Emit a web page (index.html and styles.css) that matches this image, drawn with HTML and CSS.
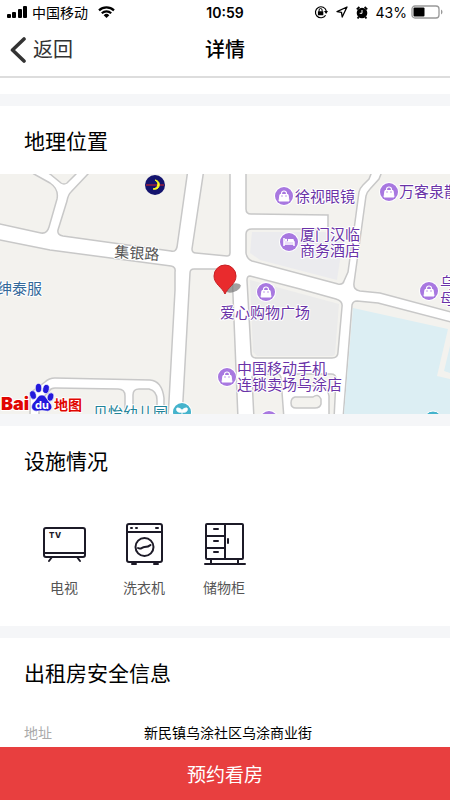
FILE: index.html
```html
<!DOCTYPE html>
<html lang="zh-CN">
<head>
  <meta charset="UTF-8" />
  <meta name="viewport" content="width=device-width, initial-scale=1" />
  <title>详情</title>
  <link rel="stylesheet" href="styles.css">
</head>
<body>
  <!-- STATUS BAR -->
  <div class="status-bar">
    <div class="status-left">
      <svg width="21" height="12" viewBox="0 0 21 12">
        <rect x="0" y="8" width="4" height="4" rx="1" />
        <rect x="5" y="6" width="4" height="6" rx="1" />
        <rect x="11" y="3" width="4" height="9" rx="1" />
        <rect x="16" y="0" width="4" height="12" rx="1" />
      </svg>
      <span>中国移动</span>
      <svg class="wifi" width="17" height="12" viewBox="0 0 17 12">
        <path d="M1 4.4a11 11 0 0 1 15 0M3.8 7.2a7 7 0 0 1 9.4 0" fill="none" stroke="#000" stroke-width="2.2" />
        <path d="M8.5 12 5.7 9.2a4 4 0 0 1 5.6 0z" />
      </svg>
    </div>
    <span class="clock">10:59</span>
    <div class="status-right">
      <svg width="14" height="14" viewBox="0 0 14 14">
        <path d="M11.6 10.2A5.5 5.5 0 1 1 12.3 6" fill="none" stroke="#000" stroke-width="1.2" />
        <path d="M10 6h4l-1.900 3zM3.900 6.300h5.400v4H3.900z" />
        <path d="M5.100 6.500V5a1.500 1.500 0 0 1 3 0v1.500" fill="none" stroke="#000" />
      </svg>
      <svg width="12" height="12" viewBox="0 0 12 12">
        <path d="M11 1 1 5.6l4.500.7.7 4.700z" fill="none" stroke="#000" stroke-width="1.300" stroke-linejoin="round" />
      </svg>
      <svg width="12" height="13" viewBox="0 0 12 13">
        <circle cx="6" cy="7" r="5.300" />
        <path d="M.8 3.400 3.400 1M11.200 3.400 8.600 1M2.600 11 1.600 12.500M9.400 11l1 1.500" stroke="#000" stroke-width="1.800" />
        <path d="M6 4v3.300H3.700" fill="none" stroke="#fff" />
      </svg>
      <span>43%</span>
      <svg class="battery" width="32" height="14" viewBox="0 0 32 14">
        <rect x="1" y="1" width="27" height="12" rx="3" fill="none" stroke="#999" stroke-width="1.300" />
        <rect x="2.500" y="2.500" width="11" height="9" rx="1" />
        <path d="M30 4.500c2 1 2 4 0 5z" fill="#999" />
      </svg>
    </div>
  </div>

  <!-- NAV BAR -->
  <header class="nav-bar">
    <button type="button" class="back">
      <svg width="16" height="26" viewBox="0 0 16 26">
        <path d="M14 2 2.500 13 14 24" fill="none" stroke="#333" stroke-width="3.600" stroke-linecap="round" stroke-linejoin="round" />
      </svg>
      返回
    </button>
    <h1>详情</h1>
  </header>

  <main>
    <!-- LOCATION -->
    <section class="block">
      <h2>地理位置</h2>
      <svg class="map" viewBox="0 0 450 240" preserveAspectRatio="xMidYMid slice">
        <defs>
          <g id="bag">
            <circle r="10" fill="#fff" />
            <circle r="9" fill="#a878e0" />
            <path d="M-4-1.500h8L5 5H-5z" fill="#fff" stroke="#fff" stroke-linejoin="round" />
            <path d="M-2.500-1.500v-1a2.500 2.500 0 0 1 5 0v1" fill="none" stroke="#fff" stroke-width="1.200" />
            <circle cx="-2" cy="0" r=".7" fill="#a878e0" />
            <circle cx="2" cy="0" r=".7" fill="#a878e0" />
          </g>
        </defs>

        <rect width="450" height="240" fill="#fff" />

        <!-- land between the roads -->
        <g class="land">
          <path d="M-5-5H26L34 0 50 9Q59 15 57 25L49 53Q47 60 41 59L-5 49z" />
          <path d="M42-5 50 0 61 9Q64 11 67 9L76 0 80-5z" />
          <path d="M93-5 88 0 71 18Q68 21 67 27L58 56Q57 61 63 62L171 77Q176 78 177 73L188-5z" />
          <path d="M204-5 192 75Q192 79 196 79L227 82Q230 82 230 79V-5z" />
          <path d="M246-5V35Q246 40 251 40L328 41V55H252Q246 55 246 60V79Q247 85 252 87L338 110Q343 111 344 107L348 98 355 48 359 18Q360 14 363 11L369 5 373-5z" />
          <path d="M383-5 379 5 370 15Q367 18 366 22L354 109Q353 116 360 117L380 119 455 139V-5z" />
          <path d="M-5 65 50 76 171 92Q176 93 175 98V116L168 245H164V224Q162 207 150 206L55 204Q49 204 45 208L30 219V245H-5z" />
          <path d="M39 245V228L49 217Q51 214 55 214L118 215Q125 215 125 222V245z" />
          <path d="M133 245V221Q133 215 139 215H149Q157 217 157 226V245z" />
          <path d="M194 95H229L232 97 238 245H182L190 99Q190 95 194 95z" />
          <path d="M250 102 300 115 336 125Q343 127 342 133L338 178Q338 184 332 184H256Q251 184 251 178L247 106Q247 102 250 102z" />
          <path d="M256 200H277Q281 200 281 205L284 245H254L252 204Q252 200 256 200z" />
          <path d="M290 200H331Q336 200 336 205L334 245H329V222Q328 212 318 212H290z" />
          <path d="M295 223H313Q318 219 321 225V230Q320 234 315 234H296Q291 234 291 229T295 223z" />
          <path d="M357 127 378 129 455 149V245H343L352 131Q353 127 357 127z" />
        </g>

        <!-- building areas and water -->
        <path d="M252 58H325L343 66 337 106 260 86 250 79z" fill="#ebebee" />
        <path d="M250 106 339 130 335 180Q334 182 330 182H257L253 178z" fill="#ebebeb" />
        <path d="M353 134 448 155 437 202 450 205V240H344z" fill="#dceef3" />
        <path d="M450 172 444 197 450 199z" fill="#dceef3" />

        <!-- place markers -->
        <use href="#bag" x="284" y="22" />
        <use href="#bag" x="389" y="18" />
        <use href="#bag" x="266" y="118" />
        <use href="#bag" x="227" y="203" />
        <use href="#bag" x="429" y="117" />
        <use href="#bag" x="269" y="246" />
        <g transform="translate(289 68)">
          <circle r="10" fill="#fff" />
          <circle r="9" fill="#a878e0" />
          <path d="M-5-4V4M-5 2H5V0H-5M5 4V0" fill="none" stroke="#fff" stroke-width="1.500" />
          <path d="M-1-3H4Q5-3 5-1V0H-1z" fill="#fff" />
          <circle cx="-3" cy="-2" r="1.200" fill="#fff" />
        </g>
        <g transform="translate(182 238)">
          <circle r="10" fill="#fff" />
          <circle r="9" fill="#45b3cc" />
          <path d="M0 0C-5 1-6-2-5-4-2-4 0-3 0 0 0-3 2-4 5-4 6-1 4 1 0 0V6" fill="#fff" stroke="#fff" />
        </g>
        <circle cx="433" cy="246" r="9" fill="#45b3cc" stroke="#fff" />
        <g transform="translate(155 11)">
          <circle r="10" fill="#14146e" />
          <path d="M-9 0H9" stroke="#d22" />
          <path d="M0-5C4-3 4 3-2 4 5 6 7-4 0-5z" fill="#ff2" stroke="#ff2" />
        </g>

        <g class="poi">
          <text x="295" y="28">徐视眼镜</text>
          <text x="399" y="23">万客泉散</text>
          <text x="300" y="66">厦门汉临</text>
          <text x="300" y="82">商务酒店</text>
          <text x="220" y="144">爱心购物广场</text>
          <text x="237" y="200">中国移动手机</text>
          <text x="237" y="216">连锁卖场乌涂店</text>
          <text x="440" y="114">乌</text>
          <text x="440" y="130">母</text>
        </g>
        <text class="road" x="114" y="83" transform="rotate(4 114 83)">集银路</text>
        <text class="shop" x="-3" y="120">绅泰服</text>
        <text class="school" x="93" y="244">贝怡幼儿园</text>

        <!-- pin -->
        <ellipse cx="233" cy="114" rx="8" ry="4" fill="#777" opacity=".7" transform="rotate(-20 233 114)" />
        <path d="M225 120C222 113 214 110 214 102A11 11 0 0 1 236 102C236 110 228 113 225 120z" fill="#e92b2d" stroke="#c81e22" />

        <!-- map provider logo -->
        <g class="baidu">
          <text class="latin" x="1" y="236">Bai</text>
          <g fill="#2319dc" stroke="#fff" stroke-width=".6">
            <ellipse cx="33" cy="221" rx="3.200" ry="4.500" transform="rotate(-15 33 221)" />
            <ellipse cx="38.500" cy="214" rx="3.200" ry="4.600" />
            <ellipse cx="46" cy="215" rx="3.200" ry="4.600" transform="rotate(12 46 215)" />
            <ellipse cx="50.500" cy="223" rx="3.200" ry="4.300" transform="rotate(15 50.500 223)" />
            <path d="M42 221C46 221 47 226 50 229 54 233 51 238 46 237Q42 236 38 237C32 238 30 233 33 229 37 226 37 221 42 221z" />
          </g>
          <text class="du" x="35" y="235">du</text>
          <text class="cjk" x="54" y="236">地图</text>
        </g>
      </svg>
    </section>

    <!-- FACILITIES -->
    <section class="block">
      <h2>设施情况</h2>
      <ul class="facilities">
        <li>
          <svg class="facility-icon" viewBox="0 0 48 48">
            <rect x="4" y="8" width="41" height="29" rx="2" />
            <path d="M4 33h41M12 37l-3 4M37 37l3 4" />
            <text class="tv" x="9" y="18">T</text>
            <text class="tv" x="15" y="18">V</text>
          </svg>
          电视
        </li>
        <li>
          <svg class="facility-icon" viewBox="0 0 48 48">
            <rect x="7" y="4" width="35" height="38" rx="2" />
            <path d="M7 12h35M11 8h1M16 8h1M36 8h2M12 44h4M34 44h4" />
            <circle cx="24.500" cy="27" r="9" />
            <path d="M18 28c3 2 4-1 6.500-1s4 0 6-2" />
          </svg>
          洗衣机
        </li>
        <li>
          <svg class="facility-icon" viewBox="0 0 48 48">
            <rect x="6" y="4" width="37" height="35" rx="1" />
            <path d="M25 4v35M6 16h19M6 28h19M14 9h4M14 21h4M14 32h4M28 19v4M11 39v5M38 39v5M5 44h40" />
          </svg>
          储物柜
        </li>
      </ul>
    </section>

    <!-- SAFETY INFO -->
    <section class="block">
      <h2>出租房安全信息</h2>
      <dl class="info">
        <dt>地址</dt>
        <dd>新民镇乌涂社区乌涂商业街</dd>
      </dl>
    </section>
  </main>

  <button type="button" class="book">预约看房</button>
</body>
</html>
```

FILE: styles.css
```css
* {
  box-sizing: border-box;
}

body {
  font-family: Inter, "Noto Sans CJK SC", sans-serif;
  background: #fff;
  color: #000;
  margin: 0;
  min-height: 100vh;
  display: flex;
  flex-direction: column;
}

h1, h2, ul, dl, dd {
  margin: 0;
  padding: 0;
  font-weight: normal;
}

button {
  border: none;
  font-family: inherit;
  cursor: pointer;
}

/* status bar */
.status-bar {
  display: grid;
  grid-template-columns: 1fr auto 1fr;
  align-items: center;
  height: 24px;
  padding: 0 7px;
  font-size: 14px;
}

.status-left, .status-right {
  display: flex;
  align-items: center;
  gap: 4px;
}

.status-right {
  justify-content: flex-end;
  gap: 8px;
}

.wifi {
  margin-left: 6px;
}

.clock {
  font-weight: 600;
}

.battery {
  margin-left: -4px;
}

/* nav bar */
.nav-bar {
  display: grid;
  grid-template-columns: 1fr auto 1fr;
  align-items: center;
  height: 54px;
  padding: 0 10px;
  border-bottom: 2px solid #ddd;
}

.nav-bar h1 {
  font-size: 20px;
  font-weight: 500;
  line-height: 30px;
}

.back {
  display: flex;
  align-items: center;
  justify-self: start;
  gap: 7px;
  padding: 0;
  background: none;
  color: #333;
  font-size: 20px;
  line-height: 30px;
}

/* content */
main {
  flex: 1;
  padding-top: 16px;
}

.block {
  border-top: 12px solid #f5f6f8;
}

.block h2 {
  padding: 21px 24px 17px;
  font-size: 21px;
  line-height: 30px;
}

.map {
  display: block;
  width: 100%;
  height: 240px;
  font-family: "Noto Sans CJK SC", sans-serif;
  font-size: 15px;
}

.land {
  fill: #f3f2ee;
  stroke: #c8c8c8;
  stroke-width: 1.5;
}

.map text {
  paint-order: stroke;
  stroke: #fff;
  stroke-width: 2px;
  stroke-linejoin: round;
}

.poi {
  fill: #6a33a8;
}

.road {
  fill: #555;
}

.shop {
  fill: #34699a;
}

.school {
  fill: #218399;
}

.baidu text {
  fill: #e10601;
  font-weight: bold;
}

.baidu .latin {
  font-family: Inter, sans-serif;
  font-size: 18px;
  font-weight: 900;
}

.baidu .du {
  fill: #fff;
  stroke: none;
  font-family: Inter, sans-serif;
  font-size: 11px;
}

.baidu .cjk {
  font-size: 14px;
}

.facilities {
  display: flex;
  list-style: none;
  padding: 26px 24px 28px;
}

.facilities li {
  display: flex;
  flex-direction: column;
  align-items: center;
  gap: 10px;
  width: 80px;
  color: #555;
  font-size: 14px;
  line-height: 20px;
}

.facility-icon {
  width: 48px;
  height: 48px;
  fill: none;
  stroke: #1c1a27;
  stroke-width: 2;
  stroke-linecap: round;
  stroke-linejoin: round;
}

.tv {
  fill: #1c1a27;
  stroke: none;
  font-size: 8px;
  font-weight: 800;
}

.info {
  display: grid;
  grid-template-columns: 120px 1fr;
  padding: 17px 24px 4px;
  font-size: 14px;
  line-height: 20px;
}

.info dt {
  color: #aaa;
}

.book {
  width: 100%;
  height: 53px;
  background: #e83f3f;
  color: #fff;
  font-size: 19px;
}
```
